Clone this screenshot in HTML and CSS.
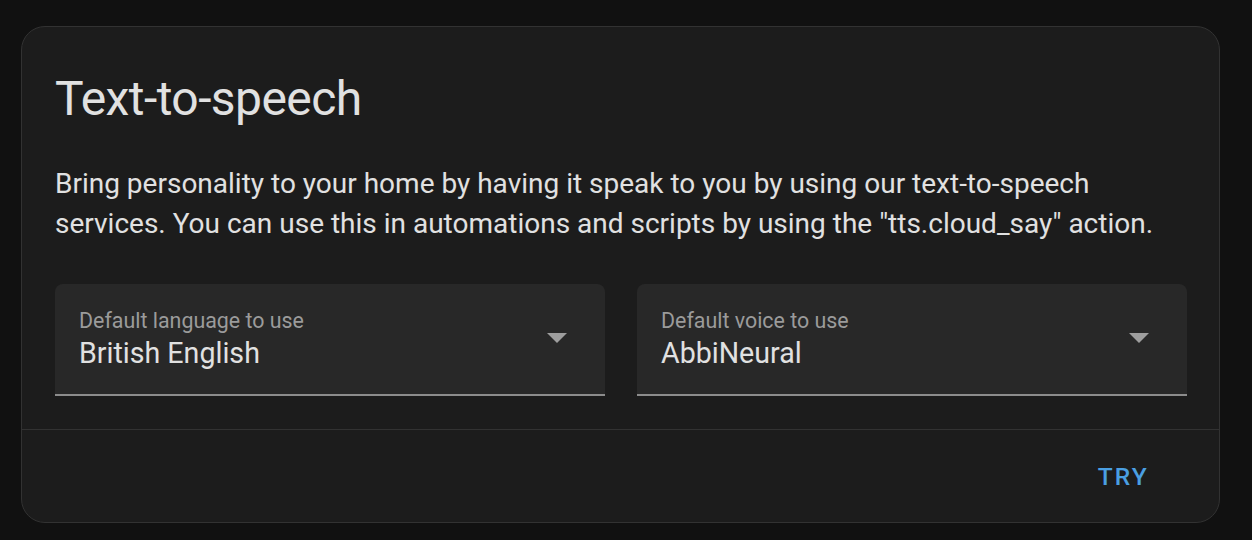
FILE: index.html
```html
<!DOCTYPE html>
<html>
<head>
<meta charset="utf-8">
<link rel="stylesheet" href="styles.css">
</head>
<body>
<div class="page">
  <div class="card">
    <div class="card-content">
      <h1 class="title">Text-to-speech</h1>
      <p class="desc">Bring personality to your home by having it speak to you by using our text-to-speech services. You can use this in automations and scripts by using the "tts.cloud_say" action.</p>
      <div class="fields">
        <div class="field">
          <div class="field-text">
            <div class="label">Default language to use</div>
            <div class="value">British English</div>
          </div>
          <svg class="arrow" width="20" height="10" viewBox="0 0 20 10"><path d="M0 0 L20 0 L10 10 Z" fill="#9e9e9e"/></svg>
        </div>
        <div class="field">
          <div class="field-text">
            <div class="label">Default voice to use</div>
            <div class="value">AbbiNeural</div>
          </div>
          <svg class="arrow" width="20" height="10" viewBox="0 0 20 10"><path d="M0 0 L20 0 L10 10 Z" fill="#9e9e9e"/></svg>
        </div>
      </div>
    </div>
    <div class="card-actions">
      <button class="btn">TRY</button>
    </div>
  </div>
</div>
</body>
</html>
```
FILE: styles.css
```css
html, body {
  margin: 0;
  padding: 0;
  background: #111111;
  font-family: Roboto, "Noto Sans", sans-serif;
}
.page {
  padding: 26px 32px 0 21px;
}
.card {
  box-sizing: border-box;
  width: 1199px;
  height: 497px;
  background: #1c1c1c;
  border: 1px solid #323232;
  border-radius: 24px;
  display: flex;
  flex-direction: column;
}
.card-content {
  padding: 0 32px 0 33px;
  flex: 1;
}
.title {
  margin: 44px 0 0 0;
  font-size: 48px;
  line-height: 56px;
  font-weight: 400;
  letter-spacing: -0.012em;
  color: #e1e1e1;
}
.desc {
  margin: 37px 0 0 0;
  font-size: 28px;
  line-height: 40px;
  color: #e1e1e1;
}
.fields {
  margin-top: 40px;
  display: flex;
  gap: 32px;
}
.field {
  box-sizing: border-box;
  width: 550px;
  height: 112px;
  background: #282828;
  border-radius: 8px 8px 0 0;
  border-bottom: 2px solid #8c8c8c;
  display: flex;
  align-items: center;
  padding: 0 38px 0 24px;
}
.field-text {
  flex: 1;
}
.label {
  font-size: 21.4px;
  line-height: 28px;
  color: #9b9b9b;
}
.value {
  font-size: 28.6px;
  line-height: 36px;
  color: #e1e1e1;
}
.arrow {
  display: block;
  margin-top: -3px;
}
.card-actions {
  height: 92px;
  border-top: 1px solid #323232;
  display: flex;
  justify-content: flex-end;
  align-items: center;
  padding-right: 50px;
}
.btn {
  background: none;
  border: none;
  font-family: Roboto, "Noto Sans", sans-serif;
  font-size: 24.5px;
  font-weight: 500;
  letter-spacing: 2.2px;
  color: #4a9fe2;
  padding: 10px 20px;
}
```
